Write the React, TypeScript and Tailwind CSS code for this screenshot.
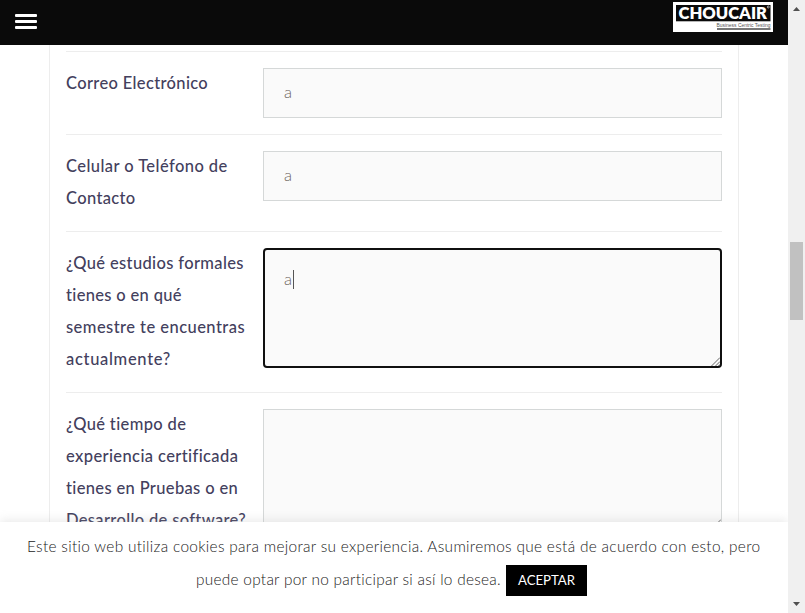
import type { ReactNode } from 'react';

type Line = { text: string; track: string };

function Row({ lines, children }: { lines: Line[]; children: ReactNode }) {
  return (
    <div className="flex border-t border-[#ededed] py-4">
      <div className="-mt-px mb-px w-[197px] shrink-0 text-[16.5px] leading-8 font-medium text-[#43405d]">
        {lines.map((l) => (
          <div key={l.text} className="whitespace-nowrap">
            <span className={l.track}>{l.text}</span>
          </div>
        ))}
      </div>
      {children}
    </div>
  );
}

function Grip() {
  return (
    <svg className="absolute right-0 bottom-0" width="9" height="9" viewBox="0 0 9 9">
      <path d="M.5 9 9 .5M4.500 9 9 4.500M7.500 9 9 7.500" stroke="#555" strokeWidth=".9" fill="none" />
    </svg>
  );
}

function Logo() {
  return (
    <svg className="mt-[2px] mr-[15px]" width="100" height="30" viewBox="0 0 100 30">
      <rect width="100" height="30" fill="#fff" />
      <rect x="3" y="3" width="94.500" height="16.300" fill="#0a0a0a" />
      <text x="5.500" y="17.200" textLength="88.500" lengthAdjust="spacingAndGlyphs" fontFamily="Lato, sans-serif" fontWeight="800" fontSize="16.500" fill="#fff">CHOUCAIR</text>
      <circle cx="95.300" cy="5" r="1" fill="none" stroke="#fff" strokeWidth=".6" />
      <text x="43.500" y="25.300" textLength="54" lengthAdjust="spacingAndGlyphs" fontFamily="'Liberation Sans', sans-serif" fontSize="5.500" fill="#555">Business Centric Testing</text>
      <rect x="44" y="26" width="53.500" height="2" fill="#777" />
    </svg>
  );
}

export default function App() {
  return (
    <div className="flex h-[613px] w-[805px] overflow-hidden bg-white font-['Lato',sans-serif]">
      <div className="relative flex w-[788px] flex-col overflow-hidden">
        <header className="flex h-[45px] shrink-0 items-start justify-between bg-[#0a0a0a]">
          <div className="mt-[14px] ml-[15px] flex w-[22px] flex-col gap-[3px]">
            <span className="h-[3px] rounded-[1px] bg-white" />
            <span className="h-[3px] rounded-[1px] bg-white" />
            <span className="h-[3px] rounded-[1px] bg-white" />
          </div>
          <Logo />
        </header>
        <main className="mr-[49px] ml-[49px] h-[568px] border-x border-[#ededed] px-4 pt-[6px]">
          <Row lines={[{ text: 'Correo Electrónico', track: 'tracking-[0.35px]' }]}>
            <div className="h-[50px] w-[459px] border border-[#d5d8d8] bg-[#fafafa] px-5 text-[16.5px] leading-[46px] font-light text-[#6b625c]">a</div>
          </Row>
          <Row
            lines={[
              { text: 'Celular o Teléfono de', track: 'tracking-[0.43px]' },
              { text: 'Contacto', track: 'tracking-[0.35px]' },
            ]}
          >
            <div className="h-[50px] w-[459px] border border-[#d5d8d8] bg-[#fafafa] px-5 text-[16.5px] leading-[46px] font-light text-[#6b625c]">a</div>
          </Row>
          <Row
            lines={[
              { text: '¿Qué estudios formales', track: 'tracking-[0.36px]' },
              { text: 'tienes o en qué', track: 'tracking-[0.33px]' },
              { text: 'semestre te encuentras', track: 'tracking-[0.45px]' },
              { text: 'actualmente?', track: 'tracking-[0.68px]' },
            ]}
          >
            <div className="relative flex h-[120px] w-[459px] items-start rounded-[4px] border-2 border-[#101010] bg-[#fafafa] px-[19px] pt-[13px] text-[16.5px] leading-8 font-light text-[#6b625c]">
              <span className="w-[9px]">a</span>
              <span className="mt-[7px] h-[19px] w-px bg-[#555]" />
              <Grip />
            </div>
          </Row>
          <Row
            lines={[
              { text: '¿Qué tiempo de', track: 'tracking-[0.35px]' },
              { text: 'experiencia certificada', track: 'tracking-[0.39px]' },
              { text: 'tienes en Pruebas o en', track: 'tracking-[0.35px]' },
              { text: 'Desarrollo de software?', track: 'tracking-[0.34px]' },
            ]}
          >
            <div className="relative h-[120px] w-[459px] border border-[#d5d8d8] bg-[#fafafa]">
              <Grip />
            </div>
          </Row>
        </main>
        <footer className="absolute inset-x-0 bottom-0 flex h-[91px] flex-col items-start bg-white pt-[8px] text-[15.4px] leading-[33px] font-light whitespace-nowrap text-[#222] shadow-[0_-1px_10px_0_rgba(172,171,171,0.3)]">
          <div className="ml-[27px]">
            <span className="tracking-[0.317px]">Este sitio web utiliza cookies para mejorar su experiencia. Asumiremos que está de acuerdo con esto, pero</span>
          </div>
          <div className="ml-[196px] flex w-[391px] justify-between">
            <span className="tracking-[0.276px]">puede optar por no participar si así lo desea.</span>
            <button className="mt-[2px] h-[31px] w-[81px] bg-black text-center text-[13.2px] leading-[31px] font-normal text-white">ACEPTAR</button>
          </div>
        </footer>
      </div>
      <aside className="flex w-[17px] flex-col items-center bg-[#f0f0f0]">
        <svg className="mt-[7px]" width="7" height="4" viewBox="0 0 7 4"><path d="M3.500 0 7 4H0z" fill="#505050" /></svg>
        <div className="mt-[231px] mr-px h-[78px] w-[13px] bg-[#c1c1c1]" />
        <svg className="mt-auto mb-[7px]" width="7" height="4" viewBox="0 0 7 4"><path d="M0 0H7L3.500 4z" fill="#505050" /></svg>
      </aside>
    </div>
  );
}
